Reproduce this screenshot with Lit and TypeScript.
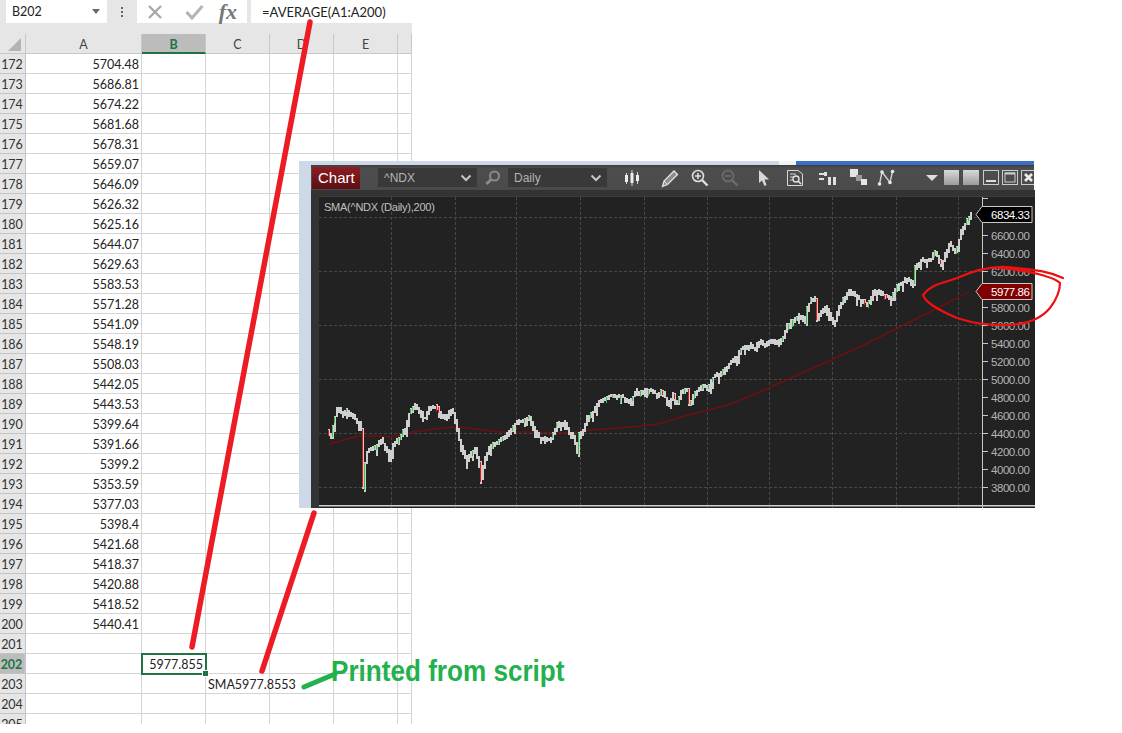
import { LitElement, html, css, svg } from "lit";
import { customElement } from "lit/decorators.js";

const VALUES: [number, string][] = [
  [172, "5704.48"], [173, "5686.81"], [174, "5674.22"], [175, "5681.68"], [176, "5678.31"],
  [177, "5659.07"], [178, "5646.09"], [179, "5626.32"], [180, "5625.16"], [181, "5644.07"],
  [182, "5629.63"], [183, "5583.53"], [184, "5571.28"], [185, "5541.09"], [186, "5548.19"],
  [187, "5508.03"], [188, "5442.05"], [189, "5443.53"], [190, "5399.64"], [191, "5391.66"],
  [192, "5399.2"], [193, "5353.59"], [194, "5377.03"], [195, "5398.4"], [196, "5421.68"],
  [197, "5418.37"], [198, "5420.88"], [199, "5418.52"], [200, "5440.41"],
  [201, ""], [202, ""], [203, ""], [204, ""], [205, ""],
];

const PRICE: [number, number][] = [
  [327,433],[330,436],[333,420],[337,408],[342,415],[346,411],[350,415],[354,419],[358,423],[361,430],[362,484],[364,462],[366,452],[370,450],
  [375,447],[380,440],[386,450],[388,460],[392,445],[398,438],[405,428],[408,413],[414,405],[420,413],[423,422],
  [428,408],[434,406],[440,415],[445,418],[451,408],[455,425],[458,440],[462,450],[466,460],[470,452],[474,448],
  [478,465],[480,477],[483,462],[487,450],[492,443],[497,443],[503,437],[510,430],[516,422],[522,420],[528,418],
  [533,430],[540,440],[545,438],[550,440],[553,432],[557,424],[563,423],[568,432],[572,437],[576,450],[578,435],
  [583,428],[586,418],[593,410],[598,402],[605,398],[612,396],[620,396],[628,402],[636,392],[650,391],[656,396],
  [660,390],[668,405],[672,394],[675,405],[680,392],[686,390],[688,403],[695,392],[703,386],[706,390],[712,377],
  [720,373],[725,367],[735,358],[740,350],[748,346],[752,348],[760,342],[764,345],[770,340],[776,344],[782,338],
  [786,326],[795,318],[800,316],[805,325],[806,308],[810,300],[815,298],[816,318],[825,305],[830,318],[833,325],
  [837,308],[848,290],[857,298],[867,305],[873,290],[890,298],[897,285],[907,278],[913,287],[913.5,268],[920,260],
  [930,258],[935,252],[940,267],[948,243],[955,252],[960,232],[967,218],[970,213],
];

const SMA: [number, number][] = [
  [328,444],[343,440],[358,436],[377,436],[390,437],[413,432],[433,429],[455,427],[467,428],[500,432],[533,432],
  [567,433],[590,430],[617,428],[640,426],[657,424],[680,417],[730,404],[763,390],[790,378],[830,360],[863,345],
  [913,320],[968,292],
];

function at(x: number): number {
  for (let i = 1; i < PRICE.length; i++) {
    const [x0, y0] = PRICE[i - 1];
    const [x1, y1] = PRICE[i];
    if (x <= x1) return y0 + ((y1 - y0) * (x - x0)) / (x1 - x0 || 1);
  }
  return PRICE[PRICE.length - 1][1];
}

let seed = 17;
const rnd = () => {
  seed = (seed * 16807) % 2147483647;
  return seed / 2147483647;
};

type Bar = { x: number; top: number; h: number; color?: string; bt?: number; bh?: number };
const BARS: Bar[] = [];
for (let x = 327; x <= 970; x += 2) {
  const a = at(x - 1);
  const b = at(x + 1);
  const jit = (rnd() - 0.5) * 3;
  const top = Math.round(Math.min(a, b) - 1 - rnd() * 1.5 + jit);
  const bottom = Math.round(Math.max(a, b) + 1 + rnd() * 2.5 + jit + (rnd() < 0.15 ? 5 : 0));
  const bar: Bar = { x, top, h: bottom - top };
  const d = b - a;
  if (rnd() < 0.2 || Math.abs(d) > 10) {
    bar.color = d > 0 ? "#f01010" : "#30c840";
    const bh = Math.abs(d) > 10 ? bottom - top - 3 : 3 + Math.round(rnd() * 4);
    bar.bt = top + 1;
    bar.bh = bh;
  }
  BARS.push(bar);
}

const pts = (p: [number, number][]) => p.map((q) => q.join(",")).join(" ");
const H_GRID = [217, 271, 325, 379, 433, 487];
const V_GRID = [390, 454, 515, 579, 643, 706, 768, 831, 895, 957];
const TICKS = [6600, 6400, 6200, 6000, 5800, 5600, 5400, 5200, 5000, 4800, 4600, 4400, 4200, 4000, 3800];
const yOf = (v: number) => 488 - (v - 3800) * 0.09;

@customElement("app-root")
export class AppRoot extends LitElement {
  static styles = css`
    :host { display: block; position: relative; width: 1122px; height: 733px; overflow: hidden; background: #fff; }
    .sheet { width: 412px; height: 724px; overflow: hidden; font-family: "Lato", "Liberation Sans", sans-serif; font-size: 12.5px; color: #222; }
    .fbar { height: 34px; background: #e6e6e6; display: flex; align-items: flex-start; box-sizing: border-box; padding-left: 6px; }
    .namebox { width: 101px; height: 23px; background: #fff; display: flex; align-items: center; justify-content: space-between; padding: 0 6px; box-sizing: border-box; }
    .caret { width: 0; height: 0; border: 4px solid transparent; border-top: 5px solid #666; border-bottom: 0; margin-right: 1px; }
    .dots { width: 30px; height: 23px; display: flex; flex-direction: column; align-items: center; justify-content: center; gap: 2px; }
    .dots i { width: 2px; height: 2px; background: #666; display: block; }
    .fx { width: 110px; height: 23px; background: #fff; display: flex; align-items: center; justify-content: space-between; padding: 0 10px; box-sizing: border-box; }
    .fx em { font: italic bold 22px "Liberation Serif", serif; color: #777; line-height: 20px; }
    .formula { flex: 1; height: 23px; margin-left: 4px; background: #fff; display: flex; align-items: center; padding-left: 11px; color: #222; font-size: 13px; }
    .row { display: grid; grid-template-columns: 26px 116px 64px 64px 64px 64px 14px; grid-template-rows: 20px; height: 20px; box-sizing: border-box; }
    .row > div { border-right: 1px solid #d4d4d4; border-bottom: 1px solid #d4d4d4; box-sizing: border-box; line-height: 21px; white-space: nowrap; }
    .head { background: #e6e6e6; }
    .head > div { background: #e6e6e6; text-align: center; border-color: #c8c8c8; color: #444; }
    .head .corner { display: flex; align-items: flex-end; justify-content: flex-end; padding: 0 4px 2px 0; }
    .tri { width: 0; height: 0; border-style: solid; border-width: 0 0 13px 13px; border-color: transparent transparent #b4b4b4 transparent; }
    .head .sel { background: #bcbcbc; color: #217346; font-weight: 700; border-bottom: 2px solid #217346; }
    .num { background: #e6e6e6; color: #333; text-align: center; border-color: #c4c4c4 !important; padding-right: 1px; }
    .num.sel { background: #bcbcbc; color: #217346; font-weight: 700; border-right: 2px solid #217346; }
    .val { text-align: right; padding-right: 2px; }
    .selcell { position: relative; outline: 2px solid #217346; outline-offset: -1px; text-align: right; padding-right: 2px; z-index: 1; overflow: visible; }
    .handle { position: absolute; right: -4px; bottom: -4px; width: 5px; height: 5px; background: #217346; border: 1px solid #fff; }
    .over { overflow: visible; padding-left: 2px; }

    .float { position: absolute; left: 299px; top: 161px; width: 735px; height: 347px; display: flex; flex-direction: column; }
    .strip { height: 4px; display: flex; flex: none; }
    .strip .pale { width: 480px; background: #cdd8e9; }
    .strip .gap { width: 17px; background: #f2f3f6; }
    .strip .blue { flex: 1; background: #3a6fc9; }
    .body { flex: 1; display: flex; min-height: 0; }
    .side { width: 12px; background: #cdd8e9; flex: none; }
    .win { flex: 1; display: flex; flex-direction: column; background: #333; font-family: "Liberation Sans", Arial, sans-serif; min-width: 0; }
    .tools { height: 25px; flex: none; background: linear-gradient(#3c3c3c, #4e4e4e 12%, #4a4a4a); display: flex; align-items: center; position: relative; overflow: hidden; }
    .title { width: 48px; height: 22px; margin-left: 1px; background: linear-gradient(#8e1c22, #5a1014); color: #fff; font-size: 15px; line-height: 22px; padding-left: 6px; box-sizing: border-box; flex: none; }
    .sel-box { height: 19px; background: #393939; color: #b4b4b4; font-size: 12px; display: flex; align-items: center; justify-content: space-between; box-sizing: border-box; padding: 0 5px 0 6px; flex: none; width: 99px; }
    .sel-box.a { margin-left: 18px; }
    .ic { flex: none; display: block; }
    .plot { flex: 1; display: block; min-height: 0; }
    .lbl { font-family: "Liberation Sans", Arial, sans-serif; font-size: 11.5px; letter-spacing: -0.45px; }
    .cap { font-family: "Liberation Sans", Arial, sans-serif; font-size: 11px; letter-spacing: -0.25px; }

    .marks { position: absolute; left: 0; top: 0; pointer-events: none; }
    .note { position: absolute; left: 331px; top: 654px; font: 700 30px/34px "Liberation Sans", sans-serif; color: #22b14c; white-space: nowrap; transform: scaleX(0.87); transform-origin: left top; }
  `;

  private chevron() {
    return html`<svg class="ic" width="12" height="8" viewBox="0 0 12 8"><path d="M1.5 1.5L6 6L10.5 1.5" fill="none" stroke="#c8c8c8" stroke-width="2"/></svg>`;
  }

  private chart() {
    return html`<svg class="plot" width="724" height="318" viewBox="310 190 724 318">
      <rect x="310" y="190" width="724" height="318" fill="#333"/>
      <rect x="318" y="196" width="716" height="312" fill="#222"/>
      <path d="M318 196.5H1034" stroke="#3d3d3d" fill="none"/>
      ${H_GRID.map((y) => svg`<line x1="318" x2="981" y1=${y + 0.5} y2=${y + 0.5} stroke="#484848" stroke-dasharray="3 2"/>`)}
      ${V_GRID.map((x) => svg`<line x1=${x + 0.5} x2=${x + 0.5} y1="197" y2="508" stroke="#484848" stroke-dasharray="3 2"/>`)}
      <polyline points=${pts(SMA)} fill="none" stroke="#6e1010" stroke-width="1.4"/>
      ${BARS.map((b) => svg`<rect x=${b.x} y=${b.top} width="2" height=${b.h} fill="#cfcfcf"/>
        ${b.color ? svg`<rect x=${b.x} y=${b.bt} width="1" height=${b.bh} fill=${b.color}/>` : ""}`)}
      <rect x="318" y="505" width="716" height="1.5" fill="#cfcfcf"/>
      <line x1="981.5" x2="981.5" y1="197" y2="508" stroke="#c8c8c8"/>
      <line x1="981" x2="987" y1="198.5" y2="198.5" stroke="#c8c8c8"/>
      ${TICKS.map((v) => svg`
        <line x1="981" x2="987" y1=${yOf(v) - 0.5} y2=${yOf(v) - 0.5} stroke="#c8c8c8"/>
        ${v === 6000 ? "" : svg`<text class="lbl" x="990" y=${yOf(v) + 3.5} fill="#b4b4b4">${v.toFixed(2)}</text>`}`)}
      <text class="cap" x="323" y="211" fill="#c0c0c0">SMA(^NDX (Daily),200)</text>
      <path d="M975 214.5L981 206.500H1031V222.500H981Z" fill="#000" stroke="#c8c8c8"/>
      <text class="lbl" x="990" y="218.500" fill="#fff">6834.33</text>
      <path d="M975 291.500L981 283.500H1031V299.500H981Z" fill="#800000" stroke="#c8c8c8"/>
      <text class="lbl" x="990" y="295.500" fill="#fff">5977.86</text>
    </svg>`;
  }

  private toolbar() {
    const s = "#d8d8d8";
    return html`<div class="tools">
      <div class="title">Chart</div>
      <div class="sel-box a"><span>^NDX</span>${this.chevron()}</div>
      <svg class="ic" style="margin:0 6px 0 7px" width="18" height="18" viewBox="0 0 18 18"><circle cx="10.500" cy="7" r="4.500" fill="none" stroke="#8a8a8a" stroke-width="2"/><path d="M7 10.500L2.500 15" stroke="#8a8a8a" stroke-width="3"/></svg>
      <div class="sel-box"><span>Daily</span>${this.chevron()}</div>
      <svg class="ic" style="margin-left:16px" width="18" height="20" viewBox="0 0 18 20"><path d="M3.500 5V16M9 2V18M14.500 4V16" stroke="${s}"/><path d="M2 7h3v7H2zM7.500 5h3v10h-3zM13 7h3v6h-3z" fill="#eee"/></svg>
      <svg class="ic" style="margin-left:20px" width="18" height="20" viewBox="0 0 18 20"><path d="M1.500 18.500L3 13L13 3L16.500 6.500L6.500 16.500Z" fill="#8c8c8c" stroke="#e4e4e4" stroke-width="1.300"/><path d="M3 13L6.500 16.500" stroke="#e4e4e4"/></svg>
      <svg class="ic" style="margin-left:12px" width="18" height="18" viewBox="0 0 18 18"><circle cx="7" cy="7" r="5.500" fill="none" stroke="#e0e0e0" stroke-width="1.600"/><path d="M4 7H10M7 4V10" stroke="#e0e0e0" stroke-width="1.600"/><path d="M11 11L16.500 16.500" stroke="#e0e0e0" stroke-width="2.400"/></svg>
      <svg class="ic" style="margin-left:12px" width="18" height="18" viewBox="0 0 18 18"><circle cx="7" cy="7" r="5.500" fill="none" stroke="#6e6e6e" stroke-width="1.600"/><path d="M4 7H10" stroke="#6e6e6e" stroke-width="1.600"/><path d="M11 11L16.500 16.500" stroke="#6e6e6e" stroke-width="2.400"/></svg>
      <svg class="ic" style="margin-left:19px" width="12" height="18" viewBox="0 0 12 18"><path d="M1 1L1 14L4 11.500L6.500 17L8.500 16L6.500 10.500L11 10.500Z" fill="#d8d8d8"/></svg>
      <svg class="ic" style="margin-left:16px" width="18" height="18" viewBox="0 0 18 18"><path d="M1.500 1.500H12L16.500 5V16.500H1.500Z" fill="none" stroke="#d8d8d8"/><path d="M4 5H10M4 8H7M4 11H7" stroke="#d8d8d8"/><circle cx="10" cy="10" r="3" fill="none" stroke="#e8e8e8" stroke-width="1.300"/><path d="M12 12L15 15" stroke="#e8e8e8" stroke-width="1.600"/></svg>
      <svg class="ic" style="margin-left:14px" width="18" height="14" viewBox="0 0 18 14"><path d="M1 3H6M1 8H6" stroke="#e0e0e0" stroke-width="2"/><rect x="6" y="1" width="3" height="4" fill="#e0e0e0"/><rect x="10" y="6" width="3" height="8" fill="#e0e0e0"/><rect x="15" y="6" width="3" height="8" fill="#e0e0e0"/></svg>
      <svg class="ic" style="margin-left:14px" width="17" height="17" viewBox="0 0 17 17"><rect x="0" y="0" width="8" height="8" fill="#e4e4e4"/><rect x="6" y="6" width="6" height="6" fill="#9a9a9a"/><rect x="11" y="10" width="6" height="6" fill="#e4e4e4"/></svg>
      <svg class="ic" style="margin-left:10px" width="18" height="18" viewBox="0 0 18 18"><path d="M2.500 15L5 3L13 13.500L15.500 2.500" fill="none" stroke="#d0d0d0" stroke-width="1.400"/><circle cx="2.500" cy="15" r="1.800" fill="#e8e8e8"/><circle cx="5" cy="3" r="1.800" fill="#e8e8e8"/><circle cx="13" cy="13.500" r="1.800" fill="#e8e8e8"/><circle cx="15.500" cy="2.500" r="1.800" fill="#e8e8e8"/></svg>
      <svg class="ic" style="margin-left:31px" width="12" height="6" viewBox="0 0 12 6"><path d="M0 0H12L6 6Z" fill="#ddd"/></svg>
      <svg class="ic" style="margin-left:6px" width="93" height="16" viewBox="0 0 93 16">
        <defs><linearGradient id="g" x1="0" x2="0" y1="0" y2="1"><stop offset="0" stop-color="#d8d8d8"/><stop offset="1" stop-color="#9c9c9c"/></linearGradient></defs>
        <rect x="0" y="0" width="15" height="15" fill="url(#g)"/>
        <rect x="19" y="0" width="16" height="15" fill="url(#g)"/>
        <rect x="39.500" y="0.500" width="15" height="14" fill="none" stroke="#ccc"/><path d="M42 11H52" stroke="#ddd" stroke-width="2"/>
        <rect x="58.500" y="0.500" width="15" height="14" fill="none" stroke="#ccc"/><rect x="61" y="3" width="10" height="9" fill="none" stroke="#ccc"/><path d="M61 3.500H71" stroke="#ccc" stroke-width="2"/>
        <rect x="77.500" y="0.500" width="15" height="14" fill="none" stroke="#ccc"/><path d="M81 4L88 11M88 4L81 11" stroke="#eee" stroke-width="2.600"/>
      </svg>
    </div>`;
  }

  render() {
    return html`
      <div class="sheet">
        <div class="fbar">
          <div class="namebox"><span>B202</span><span class="caret"></span></div>
          <div class="dots"><i></i><i></i><i></i></div>
          <div class="fx">
            <svg width="16" height="16" viewBox="0 0 16 16"><path d="M2 2L14 14M14 2L2 14" stroke="#a8a8a8" stroke-width="2.400"/></svg>
            <svg width="19" height="16" viewBox="0 0 19 16" style="margin-left:8px"><path d="M1.500 8L7 14L17.500 2" fill="none" stroke="#b4b4b4" stroke-width="3"/></svg>
            <em>fx</em>
          </div>
          <div class="formula">=AVERAGE(A1:A200)</div>
        </div>
        <div class="row head">
          <div class="corner"><span class="tri"></span></div>
          <div>A</div><div class="sel">B</div><div>C</div><div>D</div><div>E</div><div></div>
        </div>
        ${VALUES.map(
          ([n, v]) => html`<div class="row">
            <div class="num ${n === 202 ? "sel" : ""}">${n}</div>
            <div class="val">${v}</div>
            ${n === 202
              ? html`<div class="selcell">5977.855<span class="handle"></span></div>`
              : html`<div></div>`}
            ${n === 203 ? html`<div class="over">SMA5977.8553</div>` : html`<div></div>`}
            <div></div><div></div><div></div>
          </div>`
        )}
      </div>

      <div class="float">
        <div class="strip"><div class="pale"></div><div class="gap"></div><div class="blue"></div></div>
        <div class="body">
          <div class="side"></div>
          <div class="win">${this.toolbar()}${this.chart()}</div>
        </div>
      </div>

      <svg class="marks" width="1122" height="733" viewBox="0 0 1122 733">
        <g fill="none" stroke-linecap="round">
          <path d="M310 22L192 647" stroke="#ed1c24" stroke-width="5.500"/>
          <path d="M314 513L262 671" stroke="#ed1c24" stroke-width="5.500"/>
          <path d="M304 687L335 674" stroke="#22b14c" stroke-width="5"/>
          <path d="M1063 278C1050 272 1040 270 1007 267C990 266 975 270 957 278C945 283 932 283 923 295C925 302 940 311 957 318C970 322 985 326 1010 325C1025 324 1040 320 1050 308C1056 300 1060 292 1060 283C1056 279 1040 272 1000 268" stroke="#ee1111" stroke-width="2.200"/>
        </g>
      </svg>
      <div class="note">Printed from script</div>
    `;
  }
}
